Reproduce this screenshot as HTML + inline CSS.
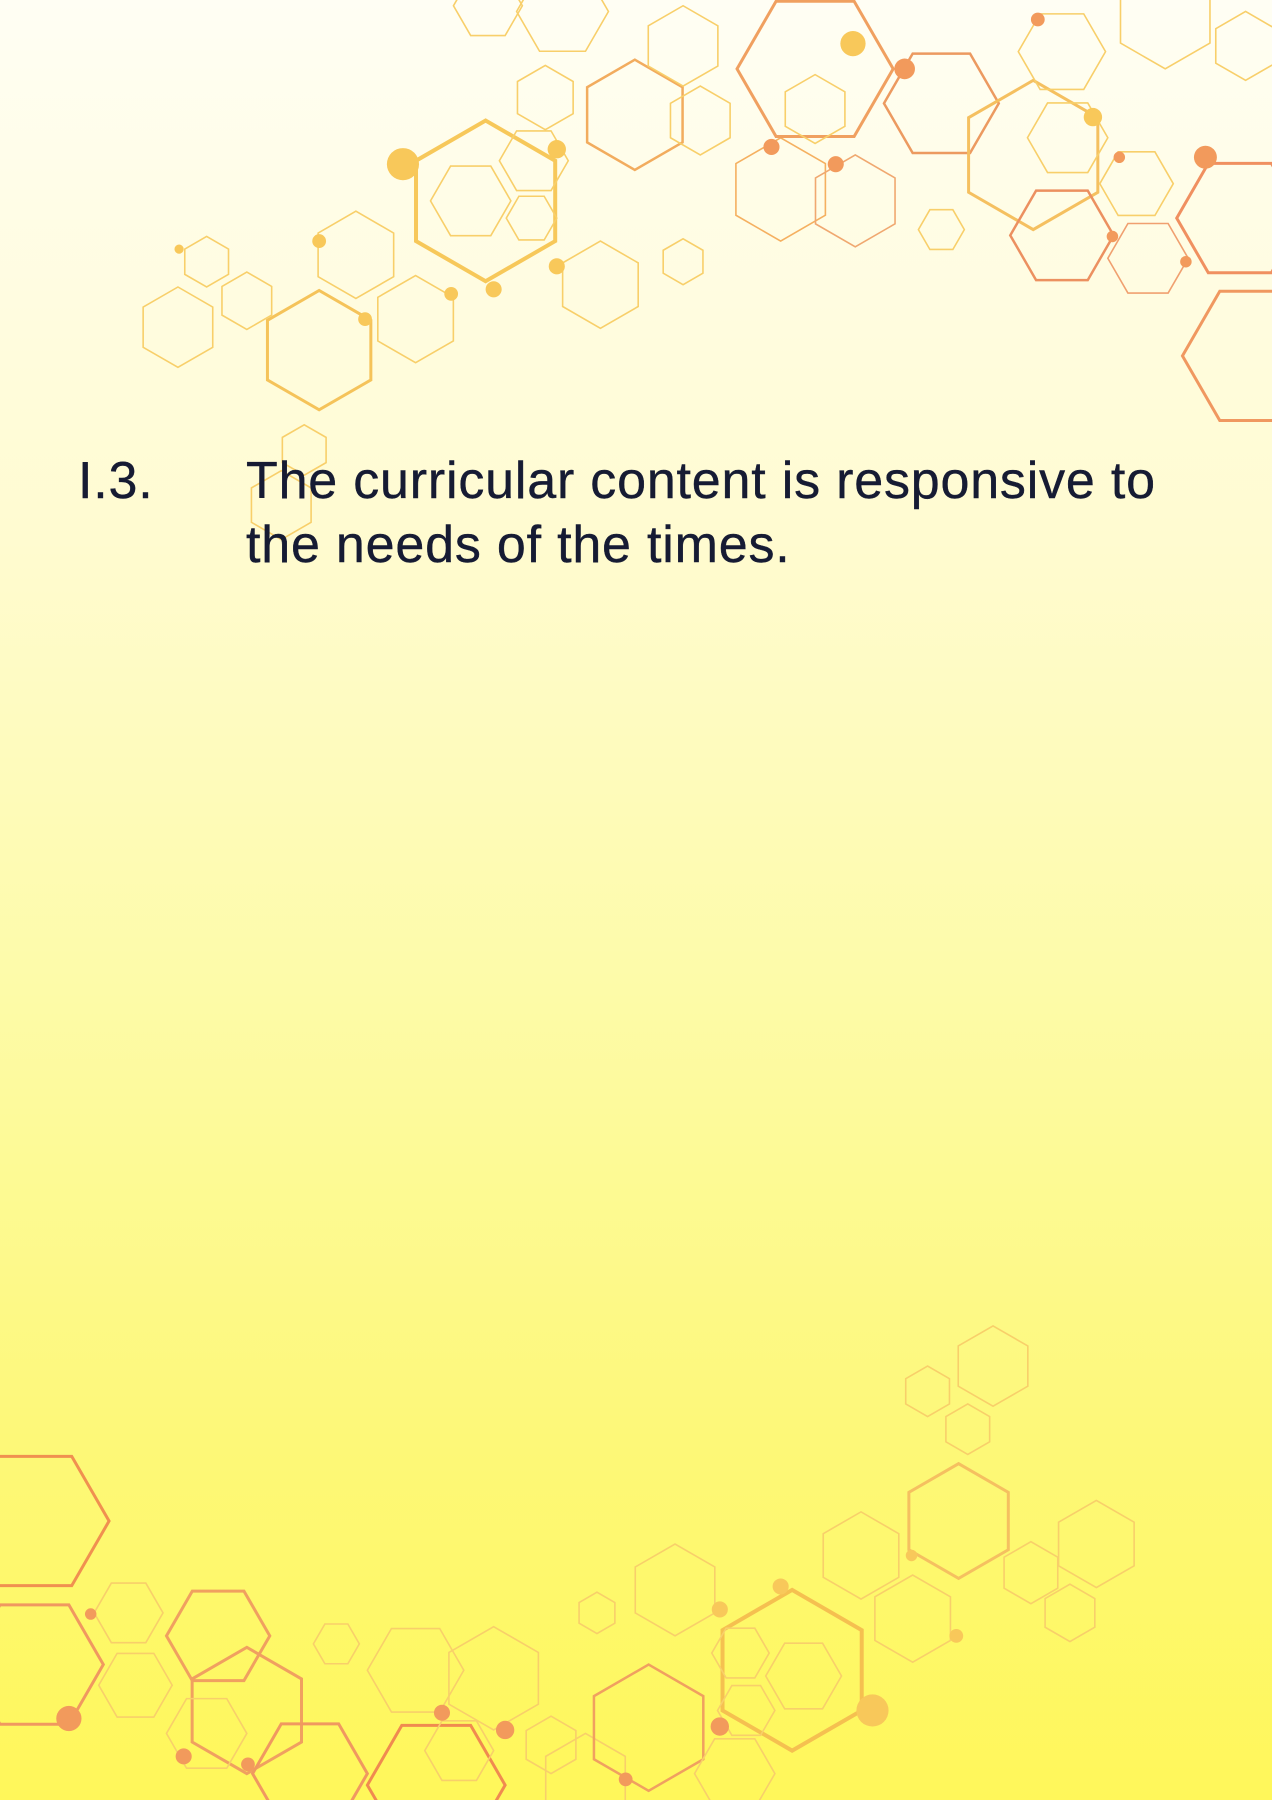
<!DOCTYPE html>
<html><head><meta charset="utf-8"><style>
html,body{margin:0;padding:0}
body{width:1272px;height:1800px;position:relative;overflow:hidden;background:linear-gradient(#fffef4 0%,#fffbd0 30%,#fdfba8 55%,#fdf878 80%,#fff75a 100%);font-family:"Liberation Sans",sans-serif}
svg{position:absolute;left:0;top:0}
.t{position:absolute;color:#161b33;font-size:52px;line-height:64px;letter-spacing:0.8px;-webkit-text-stroke:0.4px #161b33}
</style></head><body>
<svg width="1272" height="1800" viewBox="0 0 1108 1568" preserveAspectRatio="none">
<defs><polygon id="h" fill="none" vector-effect="non-scaling-stroke" points="1,0 0.5,0.866 -0.5,0.866 -1,0 -0.5,-0.866 0.5,-0.866"/></defs>
<g fill="none" stroke="#f8cf6a" stroke-width="1.6">
<use href="#h" transform="translate(423,175) rotate(30) scale(70)" stroke="#f7c85a" stroke-width="4"/>
<use href="#h" transform="translate(410,175) scale(35)"/>
<use href="#h" transform="translate(310,222) rotate(30) scale(38)"/>
<use href="#h" transform="translate(155,285) rotate(30) scale(35)"/>
<use href="#h" transform="translate(215,262) rotate(30) scale(25)"/>
<use href="#h" transform="translate(180,228) rotate(30) scale(22)"/>
<use href="#h" transform="translate(278,305) rotate(30) scale(52)" stroke="#f5c35a" stroke-width="3"/>
<use href="#h" transform="translate(362,278) rotate(30) scale(38)"/>
<use href="#h" transform="translate(523,248) rotate(30) scale(38)"/>
<use href="#h" transform="translate(465,140) scale(30)"/>
<use href="#h" transform="translate(463,190) scale(22)"/>
<use href="#h" transform="translate(553,100) rotate(30) scale(48)" stroke="#f2ac5e" stroke-width="2.5"/>
<use href="#h" transform="translate(475,85) rotate(30) scale(28)"/>
<use href="#h" transform="translate(595,40) rotate(30) scale(35)"/>
<use href="#h" transform="translate(610,105) rotate(30) scale(30)"/>
<use href="#h" transform="translate(680,165) rotate(30) scale(45)" stroke="#f5b060"/>
<use href="#h" transform="translate(710,60) scale(68)" stroke="#f0a060" stroke-width="3"/>
<use href="#h" transform="translate(710,95) rotate(30) scale(30)"/>
<use href="#h" transform="translate(745,175) rotate(30) scale(40)" stroke="#f0a870"/>
<use href="#h" transform="translate(820,90) scale(50)" stroke="#ec9a60" stroke-width="2.5"/>
<use href="#h" transform="translate(820,200) scale(20)"/>
<use href="#h" transform="translate(900,135) rotate(30) scale(65)" stroke="#f5c060" stroke-width="3"/>
<use href="#h" transform="translate(925,205) scale(45)" stroke="#ec9060" stroke-width="2.5"/>
<use href="#h" transform="translate(925,45) scale(38)"/>
<use href="#h" transform="translate(930,120) scale(35)"/>
<use href="#h" transform="translate(990,160) scale(32)"/>
<use href="#h" transform="translate(1000,225) scale(35)" stroke="#f0a070"/>
<use href="#h" transform="translate(1015,15) rotate(30) scale(45)"/>
<use href="#h" transform="translate(1085,40) rotate(30) scale(30)"/>
<use href="#h" transform="translate(1080,190) scale(55)" stroke="#f09060" stroke-width="3"/>
<use href="#h" transform="translate(1095,310) scale(65)" stroke="#f09860" stroke-width="3"/>
<use href="#h" transform="translate(595,228) rotate(30) scale(20)"/>
<use href="#h" transform="translate(490,10) scale(40)"/>
<use href="#h" transform="translate(425,5) scale(30)"/>
<use href="#h" transform="translate(30,1325) scale(65)" stroke="#f09050" stroke-width="3"/>
<use href="#h" transform="translate(30,1450) scale(60)" stroke="#f09860" stroke-width="3"/>
<use href="#h" transform="translate(112,1405) scale(30)"/>
<use href="#h" transform="translate(118,1468) scale(32)"/>
<use href="#h" transform="translate(190,1425) scale(45)" stroke="#f0a060" stroke-width="3"/>
<use href="#h" transform="translate(215,1490) rotate(30) scale(55)" stroke="#f0a060" stroke-width="3"/>
<use href="#h" transform="translate(180,1510) scale(35)"/>
<use href="#h" transform="translate(270,1545) scale(50)" stroke="#f09860" stroke-width="3"/>
<use href="#h" transform="translate(293,1432) scale(20)"/>
<use href="#h" transform="translate(362,1455) scale(42)"/>
<use href="#h" transform="translate(380,1555) scale(60)" stroke="#f08a50" stroke-width="3"/>
<use href="#h" transform="translate(430,1462) rotate(30) scale(45)"/>
<use href="#h" transform="translate(400,1525) scale(30)"/>
<use href="#h" transform="translate(480,1520) rotate(30) scale(25)"/>
<use href="#h" transform="translate(510,1550) rotate(30) scale(40)"/>
<use href="#h" transform="translate(520,1405) rotate(30) scale(18)"/>
<use href="#h" transform="translate(588,1385) rotate(30) scale(40)"/>
<use href="#h" transform="translate(565,1505) rotate(30) scale(55)" stroke="#f0a060" stroke-width="2.5"/>
<use href="#h" transform="translate(690,1455) rotate(30) scale(70)" stroke="#f5c050" stroke-width="4"/>
<use href="#h" transform="translate(700,1460) scale(33)"/>
<use href="#h" transform="translate(645,1440) scale(25)"/>
<use href="#h" transform="translate(650,1490) scale(25)"/>
<use href="#h" transform="translate(750,1355) rotate(30) scale(38)"/>
<use href="#h" transform="translate(795,1410) rotate(30) scale(38)"/>
<use href="#h" transform="translate(835,1325) rotate(30) scale(50)" stroke="#f5c060" stroke-width="3"/>
<use href="#h" transform="translate(808,1212) rotate(30) scale(22)"/>
<use href="#h" transform="translate(843,1245) rotate(30) scale(22)"/>
<use href="#h" transform="translate(865,1190) rotate(30) scale(35)"/>
<use href="#h" transform="translate(898,1370) rotate(30) scale(27)"/>
<use href="#h" transform="translate(955,1345) rotate(30) scale(38)"/>
<use href="#h" transform="translate(932,1405) rotate(30) scale(25)"/>
<use href="#h" transform="translate(640,1545) scale(35)"/>
<use href="#h" transform="translate(265,392) rotate(30) scale(22)"/>
<use href="#h" transform="translate(245,440) rotate(30) scale(30)"/>
</g>
<g fill="#f8c85a">
<circle cx="351" cy="143" r="14"/><circle cx="485" cy="130" r="8"/><circle cx="430" cy="252" r="7"/><circle cx="278" cy="210" r="6"/>
<circle cx="743" cy="38" r="11"/><circle cx="952" cy="102" r="8"/><circle cx="485" cy="232" r="7"/><circle cx="318" cy="278" r="6"/>
<circle cx="393" cy="256" r="6"/><circle cx="156" cy="217" r="4"/><circle cx="760" cy="1490" r="14"/><circle cx="680" cy="1382" r="7"/>
<circle cx="627" cy="1402" r="7"/><circle cx="833" cy="1425" r="6"/><circle cx="794" cy="1355" r="5"/>
</g>
<g fill="#f29a5c">
<circle cx="788" cy="60" r="9"/><circle cx="672" cy="128" r="7"/><circle cx="1050" cy="137" r="10"/><circle cx="904" cy="17" r="6"/>
<circle cx="975" cy="137" r="5"/><circle cx="1033" cy="228" r="5"/><circle cx="969" cy="206" r="5"/><circle cx="728" cy="143" r="7"/>
<circle cx="60" cy="1497" r="11"/><circle cx="440" cy="1507" r="8"/><circle cx="385" cy="1492" r="7"/><circle cx="627" cy="1504" r="8"/>
<circle cx="216" cy="1537" r="6"/><circle cx="160" cy="1530" r="7"/><circle cx="545" cy="1550" r="6"/><circle cx="79" cy="1406" r="5"/>
</g>
</svg>
<div class="t" style="left:78px;top:449px">I.3.</div>
<div class="t" style="left:246px;top:449px">The curricular content is responsive to<br>the needs of the times.</div>
</body></html>
